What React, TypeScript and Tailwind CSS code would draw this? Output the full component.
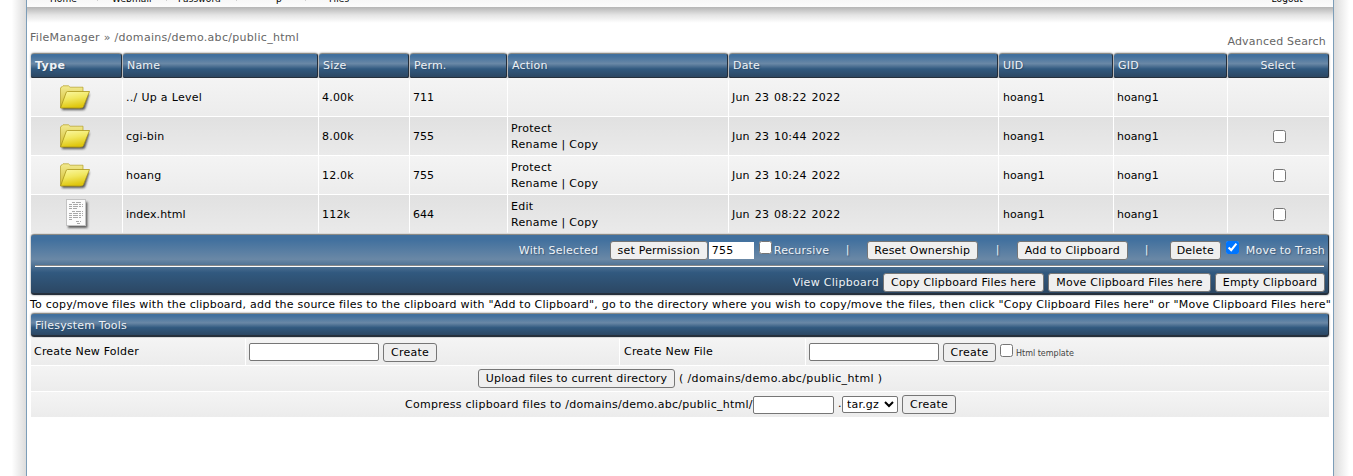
import type { ReactNode } from "react";

const cols = "grid grid-cols-[91px_195px_90px_97px_220px_269px_114px_113px_101px] gap-x-px";
const bar =
  "rounded-[3px] border-t border-r border-b-2 border-t-[#8b8b86] border-r-[#26313d] border-b-[#26303c] shadow-[0_0_2px_#00000090] text-[#eef2f6] [text-shadow:1px_1px_1px_#29435d99]";
const barFill = "bg-[linear-gradient(#41709e_0%,#41709e_8%,#6a88a6_42%,#31597f_65%,#2c4763_100%)]";
const light = "bg-linear-to-b from-[#f4f4f4] to-[#ececec]";
const dark = "bg-linear-to-b from-[#e1e1e1] to-[#eaeaea]";
const field = "h-[18px] rounded-[2px] border border-[#767676] bg-white";

function Button({ children, className }: { children: ReactNode; className: string }) {
  return (
    <button
      className={`h-[19px] shrink-0 rounded-[3px] border border-[#767676] bg-[#efefef] text-center leading-[17px] tracking-[0.2px] text-black [text-shadow:none] ${className}`}
    >
      {children}
    </button>
  );
}

function Check({ className = "", checked = false }: { className?: string; checked?: boolean }) {
  return <input type="checkbox" defaultChecked={checked} className={`m-0 size-[13px] shrink-0 ${className}`} />;
}

function Folder() {
  return (
    <svg className="mt-1 mr-1" width="34" height="30" viewBox="0 0 34 30">
      <defs>
        <linearGradient id="front" x1="0" y1="0" x2="0.3" y2="1">
          <stop offset="0" stopColor="#fbf8a4" />
          <stop offset="0.5" stopColor="#f1e75f" />
          <stop offset="1" stopColor="#dfc60c" />
        </linearGradient>
        <linearGradient id="back" x1="0" y1="0" x2="0" y2="1">
          <stop offset="0" stopColor="#f2ea90" />
          <stop offset="1" stopColor="#d1bb2c" />
        </linearGradient>
        <filter id="soft" x="-20%" y="-20%" width="140%" height="150%">
          <feGaussianBlur stdDeviation="0.9" />
        </filter>
      </defs>
      <path d="M4 6L31.5 10L27 25Q26 26 24 26L4 26Z" fill="#222" opacity=".75" filter="url(#soft)" />
      <path d="M2.5 23.5V4Q3 3 4 2.8L5 1.8H10.5L12 3.2H25V8L22 24Z" fill="url(#back)" stroke="#b39e25" strokeWidth=".7" />
      <path d="M8 9Q8.3 7.5 9.5 7.5H31.5L25.4 22.8Q24.8 24 23 24H2.5Z" fill="url(#front)" stroke="#ab951b" strokeWidth=".8" />
    </svg>
  );
}

function Doc() {
  return (
    <svg className="ml-px" width="26" height="32" viewBox="0 0 26 32">
      <rect x="4" y="4" width="19.5" height="26" fill="#333" opacity=".75" filter="url(#soft)" />
      <rect x="2.5" y="1.5" width="19" height="26" fill="#fbfbfb" stroke="#c3c3c3" />
      <g stroke="#a8a8a8" strokeWidth="1" strokeDasharray="3 1 5 1 2 1">
        <path d="M8 4.5H17M5 6.5H19M5 8.5H19M5 10.5H13M8 13.5H19M5 15.5H19M5 17.5H19M5 19.5H18M5 21.5H8M12 23.5H17M13 25.5H17" />
      </g>
    </svg>
  );
}

const rows = [
  ["../ Up a Level", "4.00k", "711", "", "Jun 23 08:22 2022"],
  ["cgi-bin", "8.00k", "755", "Protect", "Jun 23 10:44 2022"],
  ["hoang", "12.0k", "755", "Protect", "Jun 23 10:24 2022"],
  ["index.html", "112k", "644", "Edit", "Jun 23 08:22 2022"],
];

function Tick({ className }: { className: string }) {
  return <span className={`mt-[7px] h-px w-px shrink-0 bg-[#cfcfcf] ${className}`} />;
}

function Top() {
  return (
    <nav className="h-[7px] overflow-hidden bg-linear-to-b from-[#f7f7f7] to-[#fcfcfc] text-[9px] tracking-[0.1px] text-black">
      <div className="-mt-[7px] flex h-3 leading-3">
        <span className="ml-[23px] w-[47px]">Home</span>
        <Tick className="mr-3.5" />
        <span className="w-[54px]">Webmail</span>
        <Tick className="mr-[11px]" />
        <span className="w-[58px]">Password</span>
        <Tick className="mr-[39px]" />
        <span className="w-[29px]">p</span>
        <Tick className="mr-[23px]" />
        <span>Files</span>
        <span className="mr-[30px] ml-auto">Logout</span>
      </div>
    </nav>
  );
}

export default function App() {
  return (
    <div className="flex h-[476px] w-[1353px] overflow-hidden bg-white font-['DejaVu_Sans',sans-serif] text-[11px] tracking-[0.2px] whitespace-nowrap text-black">
      <div className="w-[26px] bg-linear-to-r from-white from-45% to-[#dcdcdc]" />
      <main className="w-[1308px] border-x border-[#7c9db8] bg-white">
        <Top />
        <div className="h-4 bg-linear-to-b from-[#b5b5b5] via-[#e4e4e4] to-white" />
        <div className="flex h-[30px] justify-between pr-[7px] pl-[3px] leading-[14px] text-[#666]">
          <span className="pt-2 tracking-[0.3px]">FileManager » /domains/demo.abc/public_html</span>
          <span className="pt-3">Advanced Search</span>
        </div>

        <div className="ml-1 w-[1298px]">
          <div className={`${cols} h-6`}>
            {["Type", "Name", "Size", "Perm.", "Action", "Date", "UID", "GID", "Select"].map((t, i) => (
              <div
                key={t}
                className={`${bar} ${barFill} leading-[23px] ${i === 0 ? "font-bold tracking-[0.4px]" : ""} ${i === 8 ? "text-center" : "pl-1"}`}
              >
                {t}
              </div>
            ))}
          </div>
          <div className="mt-px flex flex-col gap-px">
            {rows.map(([name, size, perm, action, date], i) => {
              const base = `${i % 2 ? dark : light} flex items-center`;
              const cell = `${base} pt-[2px] pl-[3px]`;
              return (
                <div key={name} className={`${cols} h-[38px]`}>
                  <div className={`${base} justify-center`}>{i === 3 ? <Doc /> : <Folder />}</div>
                  <div className={`${cell} ${i === 0 ? "tracking-[0.3px]" : i === 3 ? "tracking-[0.1px]" : ""}`}>
                    {name}
                  </div>
                  <div className={cell}>{size}</div>
                  <div className={`${cell} tracking-[0.05px]`}>{perm}</div>
                  <div className={`${base} pt-px pl-[3px] leading-4 tracking-[0.27px]`}>
                    {action && (
                      <div>
                        {action}
                        <br />
                        Rename | Copy
                      </div>
                    )}
                  </div>
                  <div className={`${cell} [word-spacing:1.2px]`}>{date}</div>
                  <div className={`${base} pt-[2px] pl-1 tracking-[0.05px]`}>hoang1</div>
                  <div className={`${cell} tracking-[0.05px]`}>hoang1</div>
                  <div className={`${base} justify-center pt-px pl-[2px]`}>{i > 0 && <Check />}</div>
                </div>
              );
            })}
          </div>

          <div className={`${bar} ${barFill} mt-px h-[61px] pr-[3px] pl-1`}>
            <div className="flex h-[30px] items-center justify-end">
              <span className="w-[91px] pt-[2px] tracking-[0.25px]">With Selected</span>
              <Button className="w-[98px]">set Permission</Button>
              <input
                className="ml-px h-[17px] w-[45px] bg-white px-[3px] text-black [text-shadow:none]"
                defaultValue="755"
              />
              <Check className="mb-[5px] ml-[5px]" />
              <span className="ml-[2px] w-[72px] pt-[2px]">Recursive</span>
              <span className="w-[21px]">|</span>
              <Button className="w-[111px]">Reset Ownership</Button>
              <span className="ml-[18px] w-[21px]">|</span>
              <Button className="w-[111px]">Add to Clipboard</Button>
              <span className="ml-[17px] w-[25px]">|</span>
              <Button className="w-[51px]">Delete</Button>
              <Check checked className="mb-[5px] ml-[5px]" />
              <span className="ml-[7px] pt-[2px]">Move to Trash</span>
            </div>
            <div className="mr-px h-[2px] border-t border-t-[#8a8a8a] bg-white" />
            <div className="flex h-[25px] items-end justify-end">
              <span className="mr-1 leading-[19px] tracking-[0.3px]">View Clipboard</span>
              <Button className="w-[161px]">Copy Clipboard Files here</Button>
              <Button className="ml-1 w-[163px]">Move Clipboard Files here</Button>
              <Button className="ml-1 w-[110px]">Empty Clipboard</Button>
            </div>
          </div>

          <p className="-ml-px h-[18px] pt-[3px] leading-[14px] tracking-[0.217px]">
            To copy/move files with the clipboard, add the source files to the clipboard with "Add to Clipboard", go to
            the directory where you wish to copy/move the files, then click "Copy Clipboard Files here" or "Move
            Clipboard Files here"
          </p>

          <div className={`${bar} ${barFill} h-6 pl-1 leading-[23px]`}>Filesystem Tools</div>
          <div className="mt-px grid h-[27px] grid-cols-[214px_373px_185px_523px] gap-x-px">
            <div className={`${light} flex items-center pt-[2px] pl-[3px]`}>Create New Folder</div>
            <div className={`${light} flex items-center pt-px pl-[3px]`}>
              <input className={`${field} w-[130px]`} />
              <Button className="ml-1 w-[54px]">Create</Button>
            </div>
            <div className={`${light} flex items-center pt-[2px] pl-1`}>Create New File</div>
            <div className={`${light} flex items-center pt-px pl-[3px]`}>
              <input className={`${field} w-[130px]`} />
              <Button className="ml-1 w-[53px]">Create</Button>
              <Check className="mb-1 ml-1" />
              <span className="ml-[3px] pt-1 text-[8px] tracking-normal text-[#444]">Html template</span>
            </div>
          </div>
          <div className={`${light} mt-px flex h-[25px] items-center pl-[447px]`}>
            <Button className="w-[197px]">Upload files to current directory</Button>
            <span className="ml-1 pt-px tracking-[0.36px]">( /domains/demo.abc/public_html )</span>
          </div>
          <div className={`${light} mt-px flex h-[25px] items-center pl-[374px]`}>
            <span className="w-[348px] pt-px tracking-[0.26px]">
              Compress clipboard files to /domains/demo.abc/public_html/
            </span>
            <input className={`${field} w-[81px]`} />
            <span className="ml-1 w-[4px]">.</span>
            <select className="h-[17px] w-[56px] rounded-[2px] border border-[#767676] bg-white">
              <option>tar.gz</option>
            </select>
            <Button className="ml-1 w-[54px]">Create</Button>
          </div>
        </div>
      </main>
      <div className="w-[19px] bg-linear-to-r from-[#dcdcdc] to-white to-80%" />
    </div>
  );
}
